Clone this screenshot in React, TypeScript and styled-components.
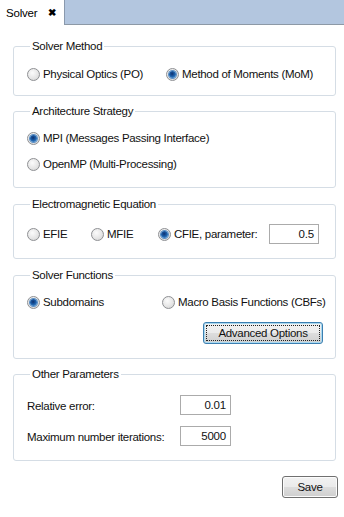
import React from "react";
import styled, { createGlobalStyle } from "styled-components";

const Global = createGlobalStyle`
  html, body { margin: 0; padding: 0; background: #ffffff; }
  body {
    font-family: "Liberation Sans", Arial, sans-serif;
    font-size: 11px;
    color: #000;
  }
  * { box-sizing: border-box; }
`;

const Page = styled.div`
  width: 344px;
  height: 517px;
  background: #fff;
  display: flex;
  flex-direction: column;
`;

const TabBar = styled.div`
  display: flex;
  height: 25px;
`;

const Tab = styled.div`
  width: 64px;
  display: flex;
  align-items: center;
  padding-left: 6px;
  gap: 11px;
  font-size: 11.5px;
  letter-spacing: -0.2px;
`;

const Close = styled.span`
  font-size: 10px;
  font-weight: bold;
  line-height: 1;
  margin-top: 1px;
`;

const TabFill = styled.div`
  flex: 1;
  background: #b3c6df;
  border-left: 1px solid #8a99ad;
  border-bottom: 1px solid #8d99a6;
`;

const Content = styled.div`
  padding: 0 8px 0 13px;
  display: flex;
  flex-direction: column;
`;

const Group = styled.fieldset<{ $top: number; $pt: number; $pb: number }>`
  margin: ${(p) => p.$top}px 0 0 0;
  padding: ${(p) => p.$pt}px 13px ${(p) => p.$pb}px 13px;
  border: 1px solid #d5dde5;
  border-radius: 3px;
  min-width: 0;
`;

const Legend = styled.legend`
  padding: 0 2px;
  margin-left: 3px;
  line-height: 14px;
  font-size: 11.5px;
  letter-spacing: -0.3px;
  color: #111;
`;

const Grid = styled.div<{ $cols: string; $rowGap?: number }>`
  display: grid;
  grid-template-columns: ${(p) => p.$cols};
  row-gap: ${(p) => p.$rowGap ?? 0}px;
  align-items: center;
`;

const RadioItem = styled.label`
  display: flex;
  align-items: center;
  gap: 3px;
  height: 14px;
  white-space: nowrap;
  font-size: 11.5px;
  letter-spacing: -0.3px;
  color: #111;
`;

const RadioCircle = styled.span<{ $on?: boolean }>`
  width: 13px;
  height: 13px;
  border-radius: 50%;
  border: 1px solid #8e9093;
  background: radial-gradient(circle at 40% 35%, #fbfbfb 0%, #e6e6e6 55%, #cfcfcf 100%);
  display: flex;
  align-items: center;
  justify-content: center;
  flex: none;
  &::after {
    content: "";
    display: ${(p) => (p.$on ? "block" : "none")};
    width: 7px;
    height: 7px;
    border-radius: 50%;
    background: radial-gradient(circle at 45% 40%, #0d2f6e 0%, #1b5ea8 45%, #67a9e3 100%);
    box-shadow: 0 0 0 1px #5b8fc4;
  }
`;

const Radio = ({ label, on }: { label: string; on?: boolean }) => (
  <RadioItem>
    <RadioCircle $on={on} />
    <span>{label}</span>
  </RadioItem>
);

const Field = styled.div<{ $w: number }>`
  width: ${(p) => p.$w}px;
  height: 20px;
  border: 1px solid #ababab;
  display: flex;
  align-items: center;
  justify-content: flex-end;
  padding-right: 4px;
  font-size: 11.5px;
  letter-spacing: -0.2px;
  color: #111;
`;

const Label = styled.span`
  font-size: 11.5px;
  letter-spacing: -0.3px;
  color: #111;
  padding-top: 2px;
`;

const ButtonRow = styled.div<{ $top: number; $right: number }>`
  display: flex;
  justify-content: flex-end;
  margin-top: ${(p) => p.$top}px;
  margin-right: ${(p) => p.$right}px;
`;

const Button = styled.button<{ $w: number; $focus?: boolean }>`
  width: ${(p) => p.$w}px;
  height: 22px;
  border-radius: 3px;
  border: 1px solid ${(p) => (p.$focus ? "#3c7fb1" : "#707070")};
  background: linear-gradient(#f2f2f2 0%, #ebebeb 50%, #dddddd 51%, #cfcfcf 100%);
  font-family: "Liberation Sans", Arial, sans-serif;
  font-size: 11.5px;
  letter-spacing: -0.3px;
  color: #111;
  padding: 0;
  position: relative;
  box-shadow: inset 0 0 0 1px ${(p) => (p.$focus ? "#a8d8f0" : "#fcfcfc")};
  &::after {
    content: "";
    display: ${(p) => (p.$focus ? "block" : "none")};
    position: absolute;
    inset: 2px;
    border: 1px dotted #222;
  }
`;

export default function App() {
  return (
    <Page>
      <Global />
      <TabBar>
        <Tab>
          <span>Solver</span>
          <Close>✖</Close>
        </Tab>
        <TabFill />
      </TabBar>
      <Content>
        <Group $top={14} $pt={14} $pb={14}>
          <Legend>Solver Method</Legend>
          <Grid $cols="139px 1fr">
            <Radio label="Physical Optics (PO)" />
            <Radio label="Method of Moments (MoM)" on />
          </Grid>
        </Group>

        <Group $top={8} $pt={13} $pb={16}>
          <Legend>Architecture Strategy</Legend>
          <Grid $cols="1fr" $rowGap={12}>
            <Radio label="MPI (Messages Passing Interface)" on />
            <Radio label="OpenMP (Multi-Processing)" />
          </Grid>
        </Group>

        <Group $top={9} $pt={13} $pb={14}>
          <Legend>Electromagnetic Equation</Legend>
          <Grid $cols="64px 67px 111px 50px">
            <Radio label="EFIE" />
            <Radio label="MFIE" />
            <Radio label="CFIE, parameter:" on />
            <Field $w={50}>0.5</Field>
          </Grid>
        </Group>

        <Group $top={9} $pt={13} $pb={14}>
          <Legend>Solver Functions</Legend>
          <Grid $cols="135px 1fr">
            <Radio label="Subdomains" on />
            <Radio label="Macro Basis Functions (CBFs)" />
          </Grid>
          <ButtonRow $top={13} $right={-1}>
            <Button $w={120} $focus>Advanced Options</Button>
          </ButtonRow>
        </Group>

        <Group $top={8} $pt={14} $pb={14}>
          <Legend>Other Parameters</Legend>
          <Grid $cols="153px 51px" $rowGap={11}>
            <Label>Relative error:</Label>
            <Field $w={51}>0.01</Field>
            <Label>Maximum number iterations:</Label>
            <Field $w={51}>5000</Field>
          </Grid>
        </Group>

        <ButtonRow $top={15} $right={-2}>
          <Button $w={56}>Save</Button>
        </ButtonRow>
      </Content>
    </Page>
  );
}
